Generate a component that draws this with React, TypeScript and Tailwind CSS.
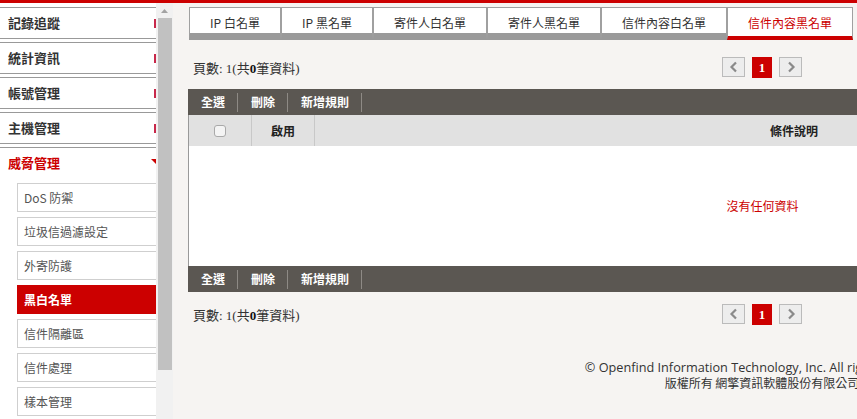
import React from "react";

const mainItems = ["記錄追蹤", "統計資訊", "帳號管理", "主機管理"];
const subItems = ["DoS 防禦", "垃圾信過濾設定", "外寄防護", "黑白名單", "信件隔離區", "信件處理", "樣本管理"];
const tabs = [
  { label: "IP 白名單", w: "w-[92px]" },
  { label: "IP 黑名單", w: "w-[92px]" },
  { label: "寄件人白名單", w: "w-[114px]" },
  { label: "寄件人黑名單", w: "w-[114px]" },
  { label: "信件內容白名單", w: "w-[126px]" },
  { label: "信件內容黑名單", w: "w-[126px]", active: true },
];

function Chevron({ dir }: { dir: "l" | "r" }) {
  return (
    <svg width="10" height="12" viewBox="0 0 10 12">
      <polyline
        points={dir === "l" ? "7,1.5 2.5,6 7,10.5" : "3,1.5 7.5,6 3,10.5"}
        fill="none"
        stroke="#8a8a8a"
        strokeWidth="2.2"
      />
    </svg>
  );
}

function PagerRow() {
  return (
    <div className="grid h-[21px] grid-cols-[1fr_auto_1fr] items-center">
      <div className="pl-[5px] pt-[3px] font-['Liberation_Serif','Noto_Sans_CJK_TC',serif] text-[13px] text-[#333]">
        頁數: 1(共<b className="text-[#111]">0</b>筆資料)
      </div>
      <div className="flex items-center gap-[7px]">
        <div className="flex h-[20px] w-[23px] items-center justify-center border border-[#bbbbbb] bg-[#ededed]">
          <Chevron dir="l" />
        </div>
        <div className="flex h-[21px] w-[20px] items-center justify-center bg-[#cc0000] font-['Liberation_Serif',serif] text-[13px] font-bold text-white">
          1
        </div>
        <div className="flex h-[20px] w-[23px] items-center justify-center border border-[#bbbbbb] bg-[#ededed]">
          <Chevron dir="r" />
        </div>
      </div>
      <div />
    </div>
  );
}

function Toolbar() {
  return (
    <div className="flex h-[26px] items-center bg-[#5b5752] text-[12px] font-bold text-white">
      {["全選", "刪除", "新增規則"].map((t) => (
        <div key={t} className="flex h-full items-center">
          <span className="pl-[13px] pr-[12px]">{t}</span>
          <span className="h-[19px] w-px bg-[#8e8a85]" />
        </div>
      ))}
    </div>
  );
}

export default function App() {
  return (
    <div className="flex h-[419px] w-[857px] flex-col overflow-hidden bg-[#f6f4f2] font-['Noto_Sans_CJK_TC',sans-serif]">
      <div className="h-[3px] shrink-0 bg-[#cc0000]" />
      <div className="flex min-h-0 flex-1">
        {/* Sidebar */}
        <div className="w-[156px] shrink-0 overflow-hidden bg-white">
          <div className="pt-[4px]">
            {mainItems.map((m) => (
              <div
                key={m}
                className="mb-[3px] flex h-[32px] items-center border-y border-[#999] pl-[8px] text-[13px] font-bold text-[#333]"
              >
                <span>{m}</span>
                <span className="ml-auto h-[9px] w-[2px] bg-[#c8284a]" />
              </div>
            ))}
            <div className="flex h-[36px] items-start border-t border-[#999] pl-[8px] pt-[5px] text-[13px] font-bold text-[#cc0000]">
              <span>威脅管理</span>
              <svg className="ml-auto mt-[6px]" width="5" height="5" viewBox="0 0 5 5">
                <path d="M0 0 H10 L5 5 Z" fill="#cc0000" />
              </svg>
            </div>
            <div className="pl-[17px]">
              {subItems.map((s) =>
                s === "黑白名單" ? (
                  <div
                    key={s}
                    className="mb-[5px] flex h-[29px] w-[160px] items-center border border-[#cc0000] bg-[#cc0000] pl-[6px] text-[12px] font-bold text-white"
                  >
                    {s}
                  </div>
                ) : (
                  <div
                    key={s}
                    className="mb-[5px] flex h-[29px] w-[160px] items-center border border-[#cfcfcf] pl-[6px] text-[12px] text-[#555]"
                  >
                    {s}
                  </div>
                )
              )}
            </div>
          </div>
        </div>
        {/* Scrollbar */}
        <div className="flex w-[17px] shrink-0 flex-col bg-[#f1f1f1]">
          <div className="flex h-[15px] items-center justify-center">
            <svg width="7" height="4" viewBox="0 0 7 4">
              <path d="M3.5 0 L7 4 H0 Z" fill="#a3a3a3" />
            </svg>
          </div>
          <div className="ml-[2px] h-[352px] w-[14px] bg-[#c1c1c1]" />
        </div>
        {/* Main */}
        <div className="ml-[15px] w-[1148px] shrink-0">
          <div className="mt-[4px] flex pl-[1px]">
            {tabs.map((t) =>
              t.active ? (
                <div
                  key={t.label}
                  className={`${t.w} flex h-[33px] items-center justify-center border border-b-[4px] border-[#a0a0a0] border-b-[#cc0000] bg-white pt-[2px] text-[12px] text-[#cc0000]`}
                >
                  {t.label}
                </div>
              ) : (
                <div
                  key={t.label}
                  className={`${t.w} flex h-[33px] items-center justify-center border border-b-[7px] border-[#a0a0a0] border-b-[#9a9a9a] bg-white pt-[5px] text-[12px] text-[#333]`}
                >
                  {t.label}
                </div>
              )
            )}
          </div>
          <div className="mt-[16px]">
            <PagerRow />
          </div>
          <div className="mt-[12px]">
            <Toolbar />
            <div className="border-l border-[#999]">
              <div className="flex h-[31px] bg-[#e1e1e1] text-[12px] font-bold text-[#222]">
                <div className="flex w-[63px] items-center justify-center border-r border-[#c8c8c8]">
                  <span className="h-[12px] w-[12px] rounded-[3px] border border-[#a9a9a9] bg-[#f4f4f4]" />
                </div>
                <div className="flex w-[63px] items-center justify-center border-r border-[#c8c8c8]">啟用</div>
                <div className="flex w-[958px] items-center justify-center">條件說明</div>
                <div className="flex-1" />
              </div>
              <div className="flex h-[120px] items-center justify-center bg-white text-[12px] text-[#cc0000]">
                沒有任何資料
              </div>
            </div>
            <Toolbar />
          </div>
          <div className="mt-[11px]">
            <PagerRow />
          </div>
          <div className="mt-[36px] text-center text-[12px] text-[#333]">
            <div className="h-[15px] font-['Open_Sans',sans-serif] text-[12.7px] leading-[15px]">© Openfind Information Technology, Inc. All rights reserved.</div>
            <div className="h-[15px] leading-[15px]">版權所有 網擎資訊軟體股份有限公司</div>
          </div>
        </div>
      </div>
    </div>
  );
}
